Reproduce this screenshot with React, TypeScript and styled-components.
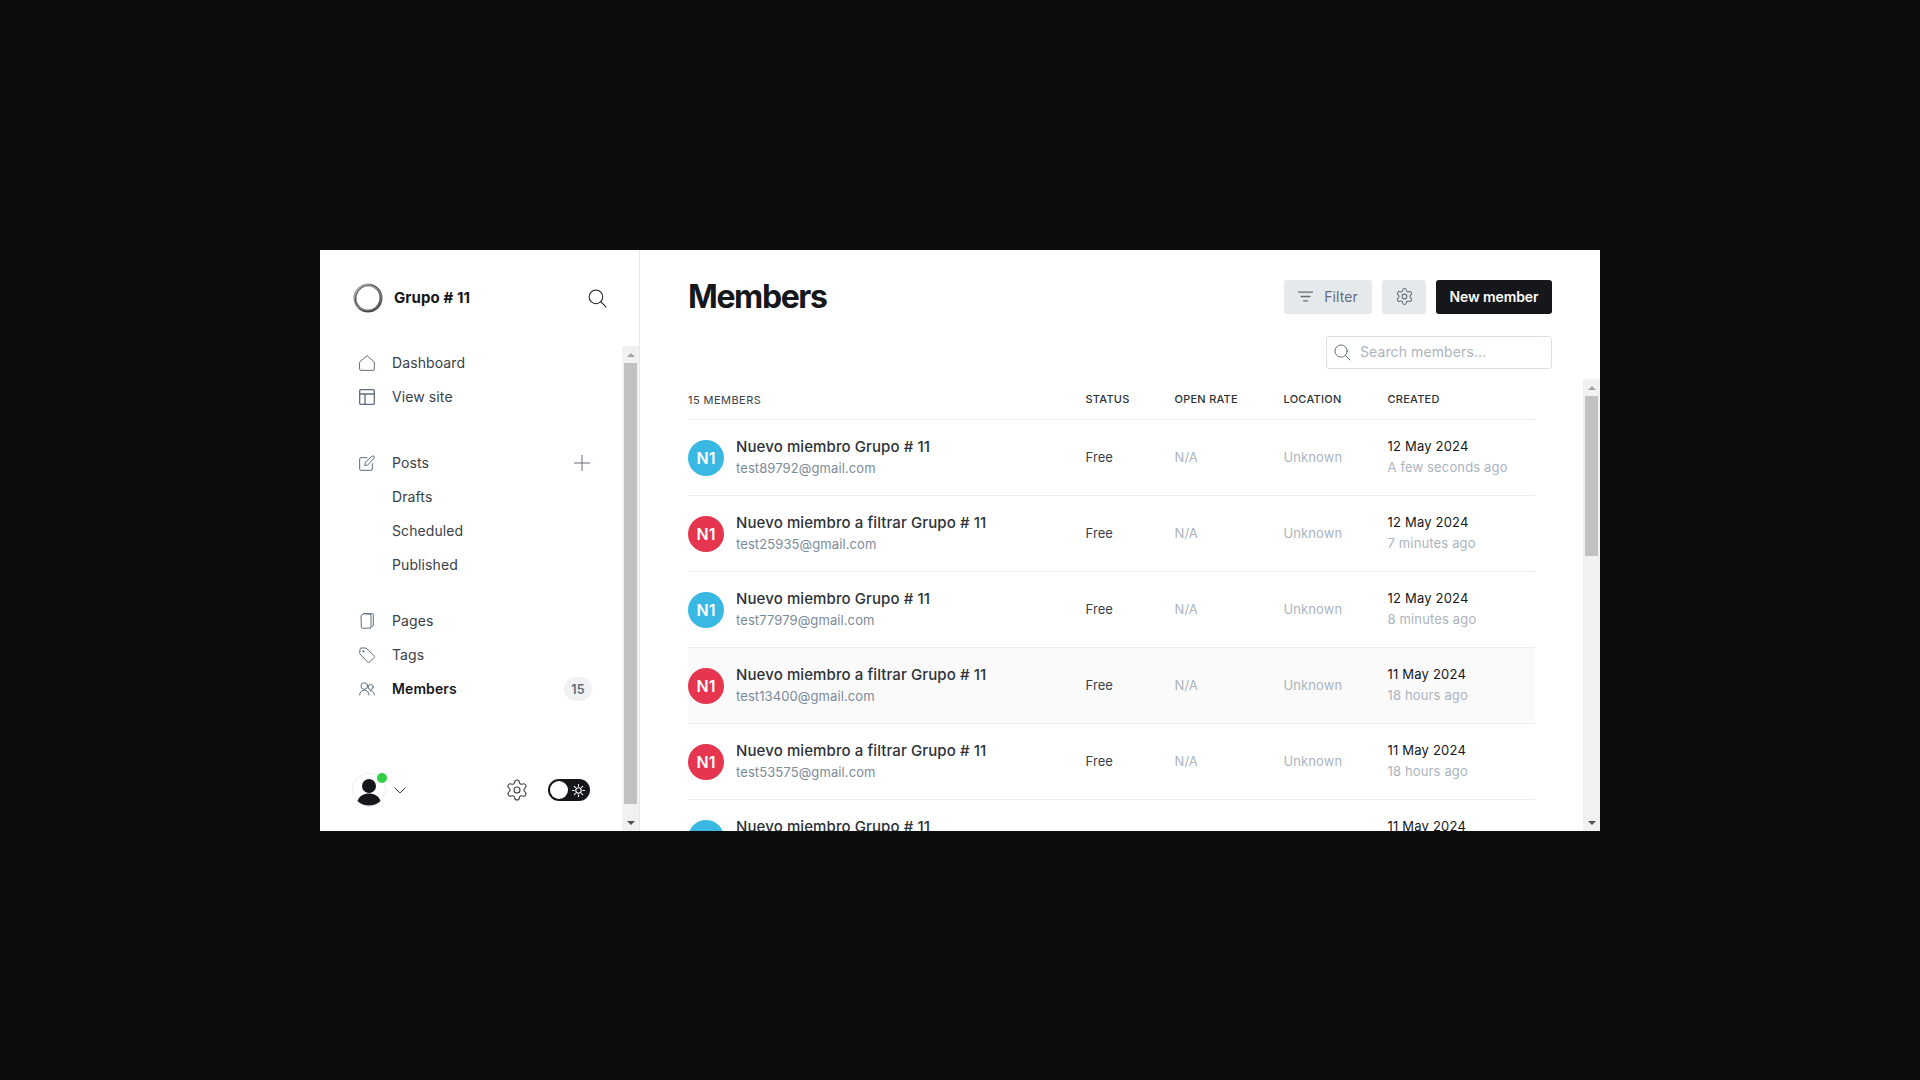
import { createGlobalStyle } from "styled-components";
import styled from "styled-components";
import { Settings } from "lucide-react";

const GlobalStyle = createGlobalStyle`
  html, body {
    margin: 0;
    padding: 0;
    height: 100%;
    background: #0d0d0d;
  }
  body {
    font-family: Inter, "Noto Sans", sans-serif;
    letter-spacing: 0.1px;
  }
  #root {
    height: 100%;
  }
  * {
    box-sizing: border-box;
  }
`;

const Page = styled.div`
  height: 1080px;
  display: flex;
  align-items: flex-start;
  justify-content: center;
  padding-top: 250px;
`;

const Window = styled.div`
  width: 1280px;
  height: 581px;
  display: flex;
  background: #fff;
  overflow: hidden;
`;

const Sidebar = styled.aside`
  width: 320px;
  flex: none;
  display: flex;
  flex-direction: column;
  border-right: 1px solid #e6e9eb;
`;

const SideHead = styled.div`
  height: 96px;
  flex: none;
  display: flex;
  align-items: center;
  padding: 0 32px 0 33px;
`;

const SiteName = styled.div`
  margin-left: 11px;
  padding-bottom: 2px;
  font-size: 15px;
  font-weight: 700;
  color: #15171a;
  flex: 1;
`;

const IconBtn = styled.span`
  display: flex;
  color: #15171a;
`;

const SideBody = styled.div`
  flex: 1;
  min-height: 0;
  display: flex;
`;

const Nav = styled.nav`
  flex: 1;
  display: flex;
  flex-direction: column;
  padding: 0 32px 24px 32px;
`;

const NavGroup = styled.div<{ $gap?: number }>`
  margin-top: ${({ $gap }) => $gap ?? 0}px;
`;

const NavRow = styled.div<{ $active?: boolean }>`
  height: 34px;
  display: flex;
  align-items: center;
  padding-left: 7px;
  font-size: 14px;
  font-weight: ${({ $active }) => ($active ? 600 : 400)};
  color: ${({ $active }) => ($active ? "#15171a" : "#394047")};
`;

const NavIcon = styled.span`
  width: 16px;
  height: 16px;
  margin-right: 17px;
  display: flex;
  color: #626d79;
`;

const NavLabel = styled.span<{ $sub?: boolean }>`
  flex: 1;
  padding-bottom: 2px;
  padding-left: ${({ $sub }) => ($sub ? 33 : 0)}px;
`;

const AddIcon = styled.span`
  display: flex;
  color: #626d79;
`;

const Badge = styled.span`
  width: 28px;
  height: 24px;
  margin-right: -2px;
  border-radius: 12px;
  display: flex;
  align-items: center;
  justify-content: center;
  background: #eff1f3;
  color: #626d79;
  font-size: 12.5px;
`;

const SideFoot = styled.div`
  margin-top: auto;
  display: flex;
  align-items: center;
  height: 34px;
`;

const UserAvatar = styled.div`
  position: relative;
  width: 34px;
  height: 34px;
  border-radius: 50%;
  border: 1px solid #eceef0;
  display: flex;
`;

const OnlineDot = styled.span`
  position: absolute;
  top: -1px;
  right: -2px;
  width: 10px;
  height: 10px;
  border-radius: 50%;
  background: #30cf43;
`;

const Chevron = styled.span`
  display: flex;
  margin-left: 8px;
  color: #394047;
  flex: 1;
`;

const GearLink = styled.span`
  display: flex;
  margin-right: 19px;
  color: #394047;
`;

const Toggle = styled.div`
  width: 42px;
  height: 22px;
  border-radius: 11px;
  background: #15171a;
  display: flex;
  align-items: center;
  justify-content: space-between;
  padding: 0 5px 0 2px;
  color: #fff;
`;

const Knob = styled.span`
  width: 18px;
  height: 18px;
  border-radius: 50%;
  background: #fff;
`;

const Track = styled.div`
  width: 17px;
  flex: none;
  display: flex;
  flex-direction: column;
  align-items: center;
  background: #f1f1f1;
`;

const Arrow = styled.span<{ $down?: boolean }>`
  height: 17px;
  flex: none;
  display: flex;
  align-items: center;
  justify-content: center;
  &::before {
    content: "";
    border-left: 4px solid transparent;
    border-right: 4px solid transparent;
    ${({ $down }) =>
      $down ? "border-top: 4px solid #505050;" : "border-bottom: 4px solid #a3a3a3;"}
  }
`;

const Thumb = styled.span<{ $length: number }>`
  width: 13px;
  height: ${({ $length }) => $length}px;
  flex: none;
  background: #c1c1c1;
`;

const TrackFill = styled.span`
  flex: 1;
`;

const Main = styled.main`
  flex: 1;
  min-width: 0;
  display: flex;
  flex-direction: column;
`;

const Top = styled.div`
  flex: none;
  padding: 30px 48px 10px;
`;

const HeaderRow = styled.header`
  display: flex;
  align-items: center;
  gap: 10px;
  height: 34px;
`;

const Title = styled.h1`
  margin: 0 auto 0 0;
  padding-bottom: 2px;
  font-size: 32px;
  font-weight: 700;
  letter-spacing: -1.4px;
  color: #15171a;
`;

const Button = styled.button<{ $dark?: boolean; $width: number }>`
  all: unset;
  box-sizing: border-box;
  width: ${({ $width }) => $width}px;
  height: 34px;
  padding-bottom: 1px;
  border-radius: 3px;
  display: flex;
  align-items: center;
  justify-content: center;
  gap: 11px;
  font-size: 14px;
  font-weight: ${({ $dark }) => ($dark ? 600 : 400)};
  letter-spacing: ${({ $dark }) => ($dark ? "-0.1px" : "0.1px")};
  background: ${({ $dark }) => ($dark ? "#15171a" : "#e6e9eb")};
  color: ${({ $dark }) => ($dark ? "#fff" : "#626d79")};
`;

const SearchRow = styled.div`
  display: flex;
  justify-content: flex-end;
  margin-top: 22px;
`;

const SearchBox = styled.label`
  width: 226px;
  height: 33px;
  border: 1px solid #dde1e5;
  border-radius: 3px;
  display: flex;
  align-items: center;
  padding-left: 7px;
  gap: 9px;
  color: #626d79;
`;

const SearchInput = styled.input`
  all: unset;
  flex: 1;
  min-width: 0;
  padding-bottom: 2px;
  font-size: 14px;
  letter-spacing: 0.1px;
  color: #15171a;
  &::placeholder {
    color: #abb4be;
    opacity: 1;
  }
`;

const TableArea = styled.div`
  flex: 1;
  min-height: 0;
  display: flex;
`;

const TableWrap = styled.div`
  flex: 1;
  min-width: 0;
  overflow: hidden;
  padding: 0 48px;
`;

const Columns = styled.div`
  display: grid;
  grid-template-columns: 397.5px 89px 109px 104px 1fr;
  align-items: center;
`;

const HeadRow = styled(Columns)`
  height: 41px;
  border-bottom: 1px solid #eceef0;
`;

const HeadCell = styled.span<{ $muted?: boolean }>`
  font-size: 11px;
  font-weight: ${({ $muted }) => ($muted ? 400 : 500)};
  letter-spacing: ${({ $muted }) => ($muted ? "0.45px" : "0.25px")};
  text-transform: uppercase;
  color: ${({ $muted }) => ($muted ? "#394047" : "#2c3238")};
  padding-top: ${({ $muted }) => ($muted ? 1 : 0)}px;
`;

const Row = styled(Columns)<{ $hover?: boolean }>`
  height: 76px;
  flex: none;
  border-bottom: 1px solid #eceef0;
  background: ${({ $hover }) => ($hover ? "#fafafb" : "transparent")};
`;

const MemberCell = styled.div`
  display: flex;
  align-items: center;
  gap: 12px;
`;

const Avatar = styled.span<{ $color: string }>`
  width: 36px;
  height: 36px;
  flex: none;
  border-radius: 50%;
  display: flex;
  align-items: center;
  justify-content: center;
  background: ${({ $color }) => $color};
  color: #fff;
  font-size: 16px;
  font-weight: 600;
`;

const Stack = styled.div<{ $lift: number }>`
  display: flex;
  flex-direction: column;
  gap: 3px;
  padding-bottom: ${({ $lift }) => $lift}px;
`;

const MemberName = styled.span`
  font-size: 15px;
  font-weight: 500;
  line-height: 18px;
  color: #2c3238;
`;

const Email = styled.span`
  font-size: 13px;
  line-height: 18px;
  color: #7c8b9a;
`;

const Cell = styled.span<{ $muted?: boolean }>`
  padding-bottom: 2px;
  font-size: 13px;
  color: ${({ $muted }) => ($muted ? "#abb4be" : "#394047")};
`;

const DateText = styled.span`
  font-size: 13px;
  line-height: 18px;
  letter-spacing: 0.2px;
  color: #15171a;
`;

const AgoText = styled.span`
  font-size: 13px;
  line-height: 18px;
  letter-spacing: 0.15px;
  color: #abb4be;
`;

const Svg = ({ size = 16, children }: { size?: number; children: React.ReactNode }) => (
  <svg
    width={size}
    height={size}
    viewBox="0 0 24 24"
    fill="none"
    stroke="currentColor"
    strokeWidth={1.5}
    strokeLinecap="round"
    strokeLinejoin="round"
  >
    {children}
  </svg>
);

const members = [
  { name: "Nuevo miembro Grupo # 11", email: "test89792@gmail.com", date: "12 May 2024", ago: "A few seconds ago", color: "#38b8e2" },
  { name: "Nuevo miembro a filtrar Grupo # 11", email: "test25935@gmail.com", date: "12 May 2024", ago: "7 minutes ago", color: "#e5354f" },
  { name: "Nuevo miembro Grupo # 11", email: "test77979@gmail.com", date: "12 May 2024", ago: "8 minutes ago", color: "#38b8e2" },
  { name: "Nuevo miembro a filtrar Grupo # 11", email: "test13400@gmail.com", date: "11 May 2024", ago: "18 hours ago", color: "#e5354f", hover: true },
  { name: "Nuevo miembro a filtrar Grupo # 11", email: "test53575@gmail.com", date: "11 May 2024", ago: "18 hours ago", color: "#e5354f" },
  { name: "Nuevo miembro Grupo # 11", email: "test41208@gmail.com", date: "11 May 2024", ago: "18 hours ago", color: "#38b8e2" },
];

function Scrollbar({ thumb }: { thumb: number }) {
  return (
    <Track>
      <Arrow />
      <Thumb $length={thumb} />
      <TrackFill />
      <Arrow $down />
    </Track>
  );
}

export default function App() {
  return (
    <Page>
      <GlobalStyle />
      <Window>
        <Sidebar>
          <SideHead>
            <svg width="30" height="30" viewBox="0 0 30 30" fill="none">
              <defs>
                <linearGradient id="ring" x1="0" y1="0" x2="1" y2="1">
                  <stop offset="0" stopColor="#c4c4c4" />
                  <stop offset="0.5" stopColor="#7d7d7d" />
                  <stop offset="1" stopColor="#2e2e2e" />
                </linearGradient>
              </defs>
              <circle cx="15" cy="15" r="13" stroke="url(#ring)" strokeWidth="3" />
              <ellipse cx="15.4" cy="15" rx="12.4" ry="13.8" stroke="#3f3f3f" strokeWidth="0.8" transform="rotate(35 15 15)" />
              <ellipse cx="14.6" cy="14.8" rx="13.8" ry="12.6" stroke="#9a9a9a" strokeWidth="0.7" />
            </svg>
            <SiteName>Grupo # 11</SiteName>
            <IconBtn>
              <Svg size={19}>
                <circle cx="10" cy="10" r="8.6" strokeWidth={1.3} />
                <path d="M16.4 16.4 22.6 22.6" strokeWidth={1.3} />
              </Svg>
            </IconBtn>
          </SideHead>
          <SideBody>
            <Nav>
              <NavGroup>
                <NavRow>
                  <NavIcon>
                    <Svg>
                      <path d="M1 10.5 12 1l11 9.5V21.5a1.5 1.5 0 0 1-1.5 1.5h-19A1.5 1.5 0 0 1 1 21.5Z" />
                    </Svg>
                  </NavIcon>
                  <NavLabel>Dashboard</NavLabel>
                </NavRow>
                <NavRow>
                  <NavIcon>
                    <Svg>
                      <rect x="1" y="1" width="22" height="22" rx="1.5" strokeWidth={2} />
                      <path d="M1 7.5h22M9 7.5V23" strokeWidth={2} />
                    </Svg>
                  </NavIcon>
                  <NavLabel>View site</NavLabel>
                </NavRow>
              </NavGroup>
              <NavGroup $gap={32}>
                <NavRow>
                  <NavIcon>
                    <Svg>
                      <path d="M12 4H3a2 2 0 0 0-2 2v15a2 2 0 0 0 2 2h15a2 2 0 0 0 2-2v-8" />
                      <path d="M20 1.5a2.3 2.3 0 0 1 3 3L13 15l-4.5 1 1-4.5Z" />
                    </Svg>
                  </NavIcon>
                  <NavLabel>Posts</NavLabel>
                  <AddIcon>
                    <Svg size={16}>
                      <path d="M12 0v24M0 12h24" />
                    </Svg>
                  </AddIcon>
                </NavRow>
                <NavRow>
                  <NavLabel $sub>Drafts</NavLabel>
                </NavRow>
                <NavRow>
                  <NavLabel $sub>Scheduled</NavLabel>
                </NavRow>
                <NavRow>
                  <NavLabel $sub>Published</NavLabel>
                </NavRow>
              </NavGroup>
              <NavGroup $gap={22}>
                <NavRow>
                  <NavIcon>
                    <Svg>
                      <path d="M7 1h13a1.5 1.5 0 0 1 1.5 1.5v16a1.5 1.5 0 0 1-1.5 1.5" />
                      <path d="M3.5 3.5 7 1l11 1v20.5L5 23a1.5 1.5 0 0 1-1.5-1.5Z" />
                    </Svg>
                  </NavIcon>
                  <NavLabel>Pages</NavLabel>
                </NavRow>
                <NavRow>
                  <NavIcon>
                    <Svg>
                      <path d="M1.5 3a1.5 1.5 0 0 1 1.5-1.5h7.5L22.5 13a2 2 0 0 1 0 3L16 22.5a2 2 0 0 1-3 0L1.5 10.5Z" />
                      <circle cx="6.5" cy="6.5" r="1" />
                    </Svg>
                  </NavIcon>
                  <NavLabel>Tags</NavLabel>
                </NavRow>
                <NavRow $active>
                  <NavIcon>
                    <Svg>
                      <circle cx="8" cy="7.5" r="5" />
                      <path d="M1 21c0-4.5 3-7 7-7s7 2.5 7 7" />
                      <circle cx="17.5" cy="9" r="3.8" />
                      <path d="M16.5 14.5c3.8-.4 6.5 2 6.5 6.5" />
                    </Svg>
                  </NavIcon>
                  <NavLabel>Members</NavLabel>
                  <Badge>15</Badge>
                </NavRow>
              </NavGroup>
              <SideFoot>
                <UserAvatar>
                  <svg width="32" height="32" viewBox="0 0 32 32">
                    <circle cx="16" cy="12" r="7" fill="#15171a" />
                    <path d="M4.5 27c2-5.5 6.5-7.5 11.5-7.5s9.5 2 11.5 7.5C24.5 30 20 31.5 16 31.5S7.5 30 4.5 27Z" fill="#15171a" />
                  </svg>
                  <OnlineDot />
                </UserAvatar>
                <Chevron>
                  <svg width="12" height="12" viewBox="0 0 12 12" fill="none" stroke="currentColor">
                    <path d="M.5 3.5 6 9l5.5-5.5" />
                  </svg>
                </Chevron>
                <GearLink>
                  <Settings size={24} strokeWidth={1.1} />
                </GearLink>
                <Toggle>
                  <Knob />
                  <svg width="13" height="13" viewBox="0 0 24 24" fill="none" stroke="currentColor" strokeWidth={2} strokeLinecap="round">
                    <circle cx="12" cy="12" r="5" />
                    <path d="M12 1v3M12 20v3M1 12h3M20 12h3M4.2 4.2l2.1 2.1M17.7 17.7l2.1 2.1M4.2 19.8l2.1-2.1M17.7 6.3l2.1-2.1" />
                  </svg>
                </Toggle>
              </SideFoot>
            </Nav>
            <Scrollbar thumb={441} />
          </SideBody>
        </Sidebar>
        <Main>
          <Top>
            <HeaderRow>
              <Title>Members</Title>
              <Button $width={88}>
                <Svg size={15}>
                  <path d="M1 5h22M5 12h14M9 19h6" strokeWidth={2.2} />
                </Svg>
                Filter
              </Button>
              <Button $width={44}>
                <Settings size={19} strokeWidth={1.3} />
              </Button>
              <Button $dark $width={116}>
                New member
              </Button>
            </HeaderRow>
            <SearchRow>
              <SearchBox>
                <Svg size={17}>
                  <circle cx="10" cy="10" r="8.6" strokeWidth={1.4} />
                  <path d="M16.4 16.4 22.6 22.6" strokeWidth={1.4} />
                </Svg>
                <SearchInput placeholder="Search members..." />
              </SearchBox>
            </SearchRow>
          </Top>
          <TableArea>
            <TableWrap>
              <HeadRow>
                <HeadCell $muted>15 members</HeadCell>
                <HeadCell>Status</HeadCell>
                <HeadCell>Open rate</HeadCell>
                <HeadCell>Location</HeadCell>
                <HeadCell>Created</HeadCell>
              </HeadRow>
              {members.map((m) => (
                <Row key={m.email} $hover={m.hover}>
                  <MemberCell>
                    <Avatar $color={m.color}>N1</Avatar>
                    <Stack $lift={1}>
                      <MemberName>{m.name}</MemberName>
                      <Email>{m.email}</Email>
                    </Stack>
                  </MemberCell>
                  <Cell>Free</Cell>
                  <Cell $muted>N/A</Cell>
                  <Cell $muted>Unknown</Cell>
                  <Stack $lift={3}>
                    <DateText>{m.date}</DateText>
                    <AgoText>{m.ago}</AgoText>
                  </Stack>
                </Row>
              ))}
            </TableWrap>
            <Scrollbar thumb={160} />
          </TableArea>
        </Main>
      </Window>
    </Page>
  );
}
